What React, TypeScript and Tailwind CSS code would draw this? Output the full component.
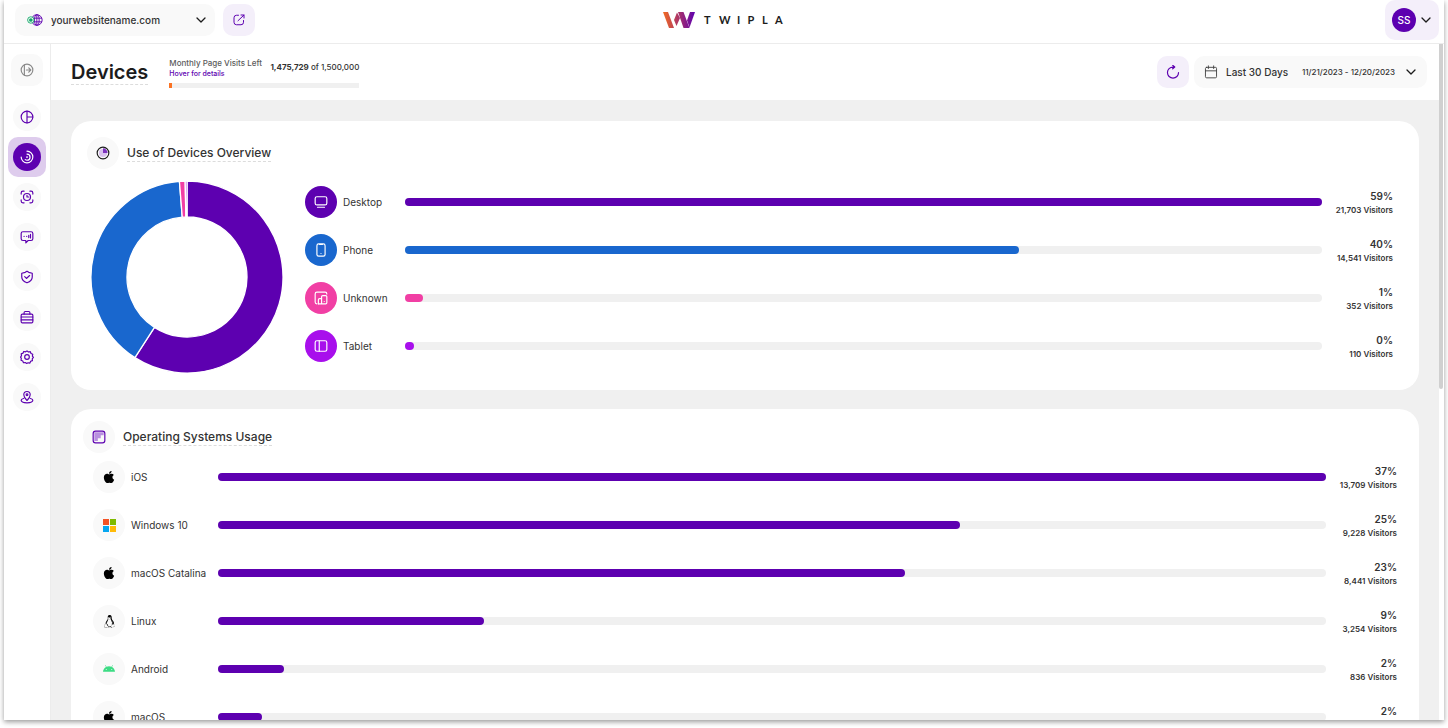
import type { FC, ReactNode } from "react";
import { useState } from "react";
import { FaAndroid, FaApple } from "react-icons/fa";
import { SiLinux } from "react-icons/si";

type IconProps = { className?: string; children: ReactNode };

const Icon: FC<IconProps> = ({ className = "size-3", children }) => (
	<svg
		viewBox="0 0 24 24"
		fill="none"
		stroke="currentColor"
		strokeWidth={2}
		strokeLinecap="round"
		strokeLinejoin="round"
		aria-hidden="true"
		className={`shrink-0 ${className}`}
	>
		{children}
	</svg>
);

const ChevronIcon: FC = () => (
	<Icon className="size-3 text-[#1c1c1c]">
		<path d="M4 8l8 8 8-8" strokeWidth={2.6} />
	</Icon>
);

const SiteIcon: FC = () => (
	<svg viewBox="0 0 34 26" fill="none" className="h-3 w-4 shrink-0" aria-hidden="true">
		<g stroke="#5d00b0" strokeWidth={2}>
			<circle cx="21" cy="13" r="11.500" />
			<ellipse cx="21" cy="13" rx="5" ry="11.500" />
			<path d="M21 1.500v23M10 9h22M10 17h22" />
		</g>
		<circle cx="8" cy="13" r="7" fill="#fff" stroke="#13a869" strokeWidth={2} />
		<circle cx="8" cy="13" r="4" fill="#13a869" />
	</svg>
);

const Logo: FC = () => (
	<svg viewBox="0 0 122 18" className="h-[18px] w-[122px]" role="img" aria-label="Twipla">
		<defs>
			<linearGradient id="logo" x1="0" y1="0" x2="32" y2="0" gradientUnits="userSpaceOnUse">
				<stop offset="0" stopColor="#f36c21" />
				<stop offset="0.5" stopColor="#a8326b" />
				<stop offset="1" stopColor="#5d00b0" />
			</linearGradient>
		</defs>
		<g fill="url(#logo)">
			<path d="M0 1h5l6 16H6z" />
			<path d="M14 1.500L11 9l2.500 6 3.500-8z" />
			<path d="M15 1h5.500l6 16h-6z" />
			<path d="M27 1H32L26.500 16.500l-2.500-7z" />
		</g>
		<text
			x="41 56 74 84.500 99 112"
			y="13"
			fill="#1c1c1c"
			className="font-['Lato'] text-[11px] font-bold"
		>
			TWIPLA
		</text>
	</svg>
);

const navItems = [
	{
		label: "Dashboard",
		icon: (
			<Icon className="size-3.5">
				<circle cx="12" cy="12" r="10" />
				<path d="M12 2v20M12 12h10" />
			</Icon>
		),
	},
	{
		label: "Devices",
		icon: (
			<Icon className="size-3.5">
				<path d="M12 2a10 10 0 1 1-10 10" />
				<path d="M12 7a5 5 0 0 1 0 10.500 6 6 0 0 1-3-1" />
				<path d="M12 12h.01" strokeWidth={3} />
			</Icon>
		),
	},
	{
		label: "Visitors",
		icon: (
			<Icon className="size-3.5">
				<path d="M2 7V5a3 3 0 0 1 3-3h2M17 2h2a3 3 0 0 1 3 3v2M22 17v2a3 3 0 0 1-3 3h-2M7 22H5a3 3 0 0 1-3-3v-2" />
				<circle cx="12" cy="12" r="6" />
				<path d="M12 9v3h3" />
			</Icon>
		),
	},
	{
		label: "Feedback",
		icon: (
			<Icon className="size-3.5">
				<path d="M5 3h14a3 3 0 0 1 3 3v9a3 3 0 0 1-3 3h-5l-4 4v-4H5a3 3 0 0 1-3-3V6a3 3 0 0 1 3-3z" />
				<path d="M7 11h.01M11.500 11h.01M15 9v4M18 7.500v6" />
			</Icon>
		),
	},
	{
		label: "Privacy",
		icon: (
			<Icon className="size-3.5">
				<path d="M12 2l3 2 6 1.500V12c0 5-4 8-9 10-5-2-9-5-9-10V5.500L9 4z" />
				<path d="M8 11.500l3 3 5.500-5" />
			</Icon>
		),
	},
	{
		label: "Business",
		icon: (
			<Icon className="size-3.5">
				<rect x="2" y="7" width="20" height="15" rx="2" />
				<path d="M7 7V4.500A2 2 0 0 1 9 2.500h6a2 2 0 0 1 2 2V7M2 12h20M2 17h20" />
			</Icon>
		),
	},
	{
		label: "Settings",
		icon: (
			<Icon className="size-3.5">
				<path d="M12 1.500l2.500 2 3.200-.6 1.200 3 3 1.300-.7 3.200 1.800 2.300-2 2.400.3 3.100-3 1.200-1.300 3-3.200-.6-2.300 1.200-2.500-1.600-3 .5-1.300-3-3-1.300.6-3.200-1.300-2.200 1.600-2.500-.5-3 3-1.300 1.300-2.900 3.200.6z" />
				<circle cx="12" cy="12" r="4" />
			</Icon>
		),
	},
	{
		label: "Locations",
		icon: (
			<Icon className="size-3.5">
				<path d="M12 18c-3.500-3.500-5.500-6.500-5.500-10a5.500 5.500 0 0 1 11 0c0 3.500-2 6.500-5.500 10z" />
				<circle cx="12" cy="8" r="1.500" />
				<path d="M6 14.500c-2.500.5-4 1.700-4 3.200C2 20.500 6.500 22 12 22s10-1.500 10-4.300c0-1.500-1.500-2.700-4-3.200" />
			</Icon>
		),
	},
];

const devices = [
	{
		name: "Desktop",
		percent: 59,
		visitors: 21703,
		width: 100,
		color: "#5d00b0",
		icon: (
			<Icon className="size-3.5">
				<rect x="2" y="3" width="20" height="14" rx="3" />
				<path d="M6 21h12" />
			</Icon>
		),
	},
	{
		name: "Phone",
		percent: 40,
		visitors: 14541,
		width: 67,
		color: "#1967ce",
		icon: (
			<Icon className="size-3.5">
				<rect x="5" y="1.500" width="14" height="21" rx="3" />
				<path d="M9.500 2.500h5M12 18h.01" />
			</Icon>
		),
	},
	{
		name: "Unknown",
		percent: 1,
		visitors: 352,
		width: 2,
		color: "#f13fa4",
		icon: (
			<Icon className="size-3.5">
				<path d="M5 22a3 3 0 0 1-3-3V5a3 3 0 0 1 3-3h14a3 3 0 0 1 3 3" />
				<path d="M7.500 22v-7a2 2 0 0 1 2-2h3.500" />
				<path d="M22 9.500V20a2 2 0 0 1-2 2H7.500M13 22V10a2 2 0 0 1 2-2h5a2 2 0 0 1 2 2M17.500 18h.01" />
			</Icon>
		),
	},
	{
		name: "Tablet",
		percent: 0,
		visitors: 110,
		width: 1,
		color: "#a80fec",
		icon: (
			<Icon className="size-3.5">
				<rect x="2" y="3" width="20" height="18" rx="3" />
				<path d="M9 3v18" />
			</Icon>
		),
	},
];

const WindowsIcon: FC = () => (
	<svg viewBox="0 0 13 13" className="size-[13px]" aria-hidden="true">
		<path fill="#f35325" d="M0 0h6v6H0z" />
		<path fill="#7fba00" d="M7 0h6v6H7z" />
		<path fill="#05a6f0" d="M0 7h6v6H0z" />
		<path fill="#ffba08" d="M7 7h6v6H7z" />
	</svg>
);

const systems = [
	{ name: "iOS", percent: 37, visitors: 13709, width: 100, icon: <FaApple className="size-3.5" /> },
	{ name: "Windows 10", percent: 25, visitors: 9228, width: 67, icon: <WindowsIcon /> },
	{ name: "macOS Catalina", percent: 23, visitors: 8441, width: 62, icon: <FaApple className="size-3.5" /> },
	{ name: "Linux", percent: 9, visitors: 3254, width: 24, icon: <SiLinux className="size-[13px]" /> },
	{ name: "Android", percent: 2, visitors: 836, width: 6, icon: <FaAndroid className="size-3 text-[#3ddc84]" /> },
	{ name: "macOS", percent: 2, visitors: 551, width: 4, icon: <FaApple className="size-3.5" /> },
];

const OUTER = 96;
const INNER = 60;

const point = (radius: number, share: number) => {
	const angle = share * 2 * Math.PI;
	return `${96 + radius * Math.sin(angle)} ${96 - radius * Math.cos(angle)}`;
};

const DonutChart: FC = () => {
	const total = devices.reduce((sum, device) => sum + device.visitors, 0);
	let start = 0;

	return (
		<svg viewBox="0 0 192 192" className="size-48 shrink-0" role="img" aria-label="Use of devices">
			{devices.map((device) => {
				const end = start + device.visitors / total;
				const large = end - start > 0.5 ? 1 : 0;
				const d = `M${point(OUTER, start)}A${OUTER} ${OUTER} 0 ${large} 1 ${point(OUTER, end)}L${point(INNER, end)}A${INNER} ${INNER} 0 ${large} 0 ${point(INNER, start)}Z`;
				start = end;
				return <path key={device.name} d={d} fill={device.color} stroke="#fff" strokeWidth={1.3} />;
			})}
		</svg>
	);
};

type UsageBarProps = {
	percent: number;
	visitors: number;
	width: number;
	color: string;
};

const UsageBar: FC<UsageBarProps> = ({ percent, visitors, width, color }) => (
	<>
		<div className="h-2 flex-1 rounded-full bg-[#f0f0f0]">
			<div
				className="h-2 rounded-full"
				style={{ width: `${width}%`, backgroundColor: color }}
			/>
		</div>
		<div className="w-[71px] text-right font-semibold">
			<p className="text-[10px] leading-4">{percent}%</p>
			<p className="text-[8px] leading-3">{visitors.toLocaleString("en-US")} Visitors</p>
		</div>
	</>
);

const CardTitle: FC<{ icon: ReactNode; children: ReactNode }> = ({ icon, children }) => (
	<header className="flex items-center gap-2">
		<span className="flex size-8 items-center justify-center rounded-full bg-[#f9f9f9]">
			{icon}
		</span>
		<h2 className="border-b border-dashed border-[#dcdcdc] text-xs font-medium">{children}</h2>
	</header>
);

const TopBar: FC = () => (
	<header className="grid h-11 shrink-0 grid-cols-[1fr_auto_1fr] items-start border-b border-[#ececec] px-[5px]">
		<div className="flex gap-2 pt-1 pl-1.5">
			<label className="flex h-8 w-[200px] items-center rounded-[10px] bg-[#f9f9f9] pr-2 pl-3">
				<SiteIcon />
				<select
					aria-label="Website"
					className="min-w-0 flex-1 appearance-none bg-transparent pl-2 text-[10px] font-medium"
				>
					<option>yourwebsitename.com</option>
				</select>
				<ChevronIcon />
			</label>
			<button
				type="button"
				aria-label="Open website"
				className="flex size-8 items-center justify-center rounded-[10px] bg-[#f4effa] text-[#5d00b0]"
			>
				<Icon>
					<path d="M11 2.500H7A5 5 0 0 0 2 7.500v9a5 5 0 0 0 5 5h9a5 5 0 0 0 5-5V13M10 13.500L22 2M16 2h6v6" />
				</Icon>
			</button>
		</div>
		<div className="pt-[11px]">
			<Logo />
		</div>
		<button
			type="button"
			aria-label="Account"
			className="flex h-10 w-[54px] items-center justify-center gap-1 justify-self-end rounded-[10px] bg-[#f4effa]"
		>
			<span className="flex size-6 items-center justify-center rounded-full bg-[#5d00b0] text-[10px] font-medium text-white">
				SS
			</span>
			<ChevronIcon />
		</button>
	</header>
);

const Sidebar: FC<{ active: string; onSelect: (label: string) => void }> = ({
	active,
	onSelect,
}) => (
	<nav className="flex w-[47px] shrink-0 flex-col items-center border-r border-[#ececec] pt-2.5">
		<button
			type="button"
			aria-label="Expand menu"
			className="mb-[11px] flex size-8 shrink-0 items-center justify-center rounded-[10px] bg-[#f9f9f9] text-[#8a8a8a]"
		>
			<Icon className="size-3.5">
				<circle cx="12" cy="12" r="10" />
				<path d="M7.500 3v18M11 12h7M15 8.500l3.500 3.500-3.500 3.500" />
			</Icon>
		</button>
		{navItems.map((item) => (
			<button
				key={item.label}
				type="button"
				aria-label={item.label}
				onClick={() => onSelect(item.label)}
				className={`flex h-10 w-[38px] shrink-0 items-center justify-center rounded-[10px] ${
					item.label === active ? "bg-[#decced]" : ""
				}`}
			>
				<span
					className={`flex size-7 items-center justify-center rounded-full ${
						item.label === active ? "bg-[#5d00b0] text-white" : "bg-[#f9f9f9] text-[#5d00b0]"
					}`}
				>
					{item.icon}
				</span>
			</button>
		))}
	</nav>
);

const PageHeader: FC = () => (
	<div className="flex h-14 shrink-0 items-center bg-white pr-3 pl-5">
		<h1 className="border-b border-dashed border-[#dcdcdc] text-xl leading-6 font-semibold text-[#1c1c1c]">
			Devices
		</h1>
		<div className="ml-[21px] w-[190px]">
			<div className="flex items-start justify-between whitespace-nowrap">
				<div className="font-medium">
					<p className="text-[8px] leading-3 text-[#5c5c5c]">Monthly Page Visits Left</p>
					<a href="#details" className="block text-[7px] leading-[10px] text-[#5d00b0]">
						Hover for details
					</a>
				</div>
				<p className="text-[8px] leading-5 font-medium">
					<strong className="font-bold">1,475,729</strong> of 1,500,000
				</p>
			</div>
			<div className="mt-1 h-[5px] bg-[#f0f0f0]">
				<div className="h-full w-[3px] bg-[#fb7324]" />
			</div>
		</div>
		<button
			type="button"
			aria-label="Refresh"
			className="ml-auto flex size-8 items-center justify-center rounded-[10px] bg-[#f4effa] text-[#5d00b0]"
		>
			<Icon className="size-3.5">
				<path d="M21.500 13A9.500 9.500 0 1 1 12 3.500h2M11.500.5l3.500 3-3.500 3" />
			</Icon>
		</button>
		<button
			type="button"
			className="ml-[5px] flex h-8 w-[233px] items-center rounded-[10px] bg-[#f9f9f9] px-2.5 font-medium whitespace-nowrap"
		>
			<Icon className="size-3.5 text-[#444]">
				<rect x="2.500" y="4" width="19" height="18" rx="2" strokeWidth={1.6} />
				<path d="M2.500 10h19M7.500 1.500V6M16.500 1.500V6" strokeWidth={1.6} />
			</Icon>
			<span className="ml-2 text-[10px]">Last 30 Days</span>
			<span className="mr-2.5 ml-auto text-[8px]">11/21/2023 - 12/20/2023</span>
			<ChevronIcon />
		</button>
	</div>
);

const DevicesCard: FC = () => (
	<section className="rounded-[20px] bg-white px-4 pt-4 pb-3.5">
		<CardTitle
			icon={
				<Icon className="size-3.5 text-[#1c1c1c]">
					<path d="M12 12h7a7 7 0 1 1-7-7z" fill="#d9c2ee" stroke="none" />
					<path d="M12 12V4a8 8 0 0 1 8 8z" fill="#7d33c0" stroke="none" />
					<circle cx="12" cy="12" r="10" />
				</Icon>
			}
		>
			Use of Devices Overview
		</CardTitle>
		<div className="mt-[9px] flex items-center gap-[22px] pl-1">
			<DonutChart />
			<ul className="min-w-0 flex-1 pr-2.5 pb-1.5">
				{devices.map((device) => (
					<li key={device.name} className="flex h-12 items-center">
						<span
							className="flex size-8 items-center justify-center rounded-full text-white"
							style={{ backgroundColor: device.color }}
						>
							{device.icon}
						</span>
						<span className="w-[68px] pl-1.5 text-[10px]">{device.name}</span>
						<UsageBar {...device} />
					</li>
				))}
			</ul>
		</div>
	</section>
);

const SystemsCard: FC = () => (
	<section className="rounded-[20px] bg-white p-3">
		<CardTitle
			icon={
				<Icon className="size-3.5 text-[#5d00b0]">
					<path d="M4 4h16v5h-5v5h-5v5H4z" fill="#b98fe0" stroke="none" />
					<rect x="2" y="2" width="20" height="20" rx="4" />
				</Icon>
			}
		>
			Operating Systems Usage
		</CardTitle>
		<ul className="px-2.5">
			{systems.map((system) => (
				<li key={system.name} className="flex h-12 items-center">
					<span className="flex size-8 items-center justify-center rounded-full bg-[#f9f9f9] text-black">
						{system.icon}
					</span>
					<span className="w-[93px] pl-1.5 text-[10px]">{system.name}</span>
					<UsageBar {...system} color="#5d00b0" />
				</li>
			))}
		</ul>
	</section>
);

export default function App() {
	const [active, setActive] = useState("Devices");

	return (
		<div className="h-screen overflow-hidden bg-white px-1 pb-2 font-['Inter',sans-serif] text-[#333]">
			<div className="flex h-full flex-col bg-white shadow-[0_2px_5px_rgba(0,0,0,0.4)]">
				<TopBar />
				<div className="flex min-h-0 flex-1">
					<Sidebar active={active} onSelect={setActive} />
					<main className="flex min-w-0 flex-1 flex-col bg-[#f0f0f0]">
						<PageHeader />
						<div className="flex min-h-0 flex-1 flex-col gap-[19px] overflow-y-auto px-5 pt-[21px] [scrollbar-width:none] *:shrink-0">
							<DevicesCard />
							<SystemsCard />
						</div>
					</main>
					<div className="w-[5px] shrink-0 pr-px">
						<div className="h-[51%] rounded-b-full bg-[#d0d0d0]" />
					</div>
				</div>
			</div>
		</div>
	);
}
